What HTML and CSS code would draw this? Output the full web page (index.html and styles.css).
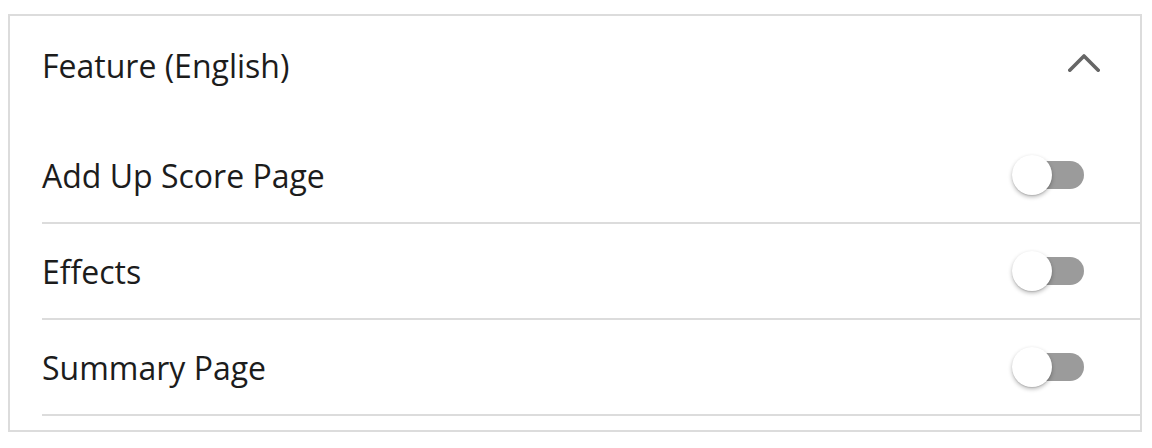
FILE: index.html
```html
<!DOCTYPE html>
<html>
<head>
<meta charset="utf-8">
<link rel="stylesheet" href="styles.css">
</head>
<body>
<section class="panel">
  <header class="panel-header">
    <h2 class="panel-title">Feature (English)</h2>
    <svg class="chevron" width="32" height="18" viewBox="0 0 32 18" aria-hidden="true">
      <polyline points="1.8,16.2 16,2 30.2,16.2" fill="none" stroke="#666666" stroke-width="3.6" stroke-linecap="round" stroke-linejoin="round"/>
    </svg>
  </header>
  <ul class="rows">
    <li class="row"><span class="label">Add Up Score Page</span><span class="switch"><span class="track"></span><span class="thumb"></span></span></li>
    <li class="row"><span class="label">Effects</span><span class="switch"><span class="track"></span><span class="thumb"></span></span></li>
    <li class="row"><span class="label">Summary Page</span><span class="switch"><span class="track"></span><span class="thumb"></span></span></li>
  </ul>
</section>
</body>
</html>
```
FILE: styles.css
```css
html, body {
  margin: 0;
  padding: 0;
  background: #ffffff;
}
body {
  font-family: "Open Sans", "Noto Sans", sans-serif;
  color: #1c1c1c;
}
.panel {
  box-sizing: border-box;
  width: 1134px;
  height: 418px;
  margin: 14px 0 0 8px;
  border: 2px solid #dcdcdc;
  padding: 0 0 14px 32px;
}
.panel-header {
  display: flex;
  align-items: center;
  justify-content: space-between;
  height: 100px;
  margin-bottom: 12px;
  padding-right: 40px;
}
.panel-title {
  margin: 0;
  font-size: 32px;
  font-weight: 400;
  line-height: 40px;
}
.chevron {
  display: block;
  margin-bottom: 7px;
}
.rows {
  list-style: none;
  margin: 0;
  padding: 0;
}
.row {
  display: flex;
  align-items: center;
  justify-content: space-between;
  height: 94px;
  border-bottom: 2px solid #dcdcdc;
  padding-right: 56px;
}
.label {
  font-size: 32px;
  line-height: 40px;
  padding-top: 1px;
}
.switch {
  position: relative;
  display: block;
  width: 72px;
  height: 28px;
}
.track {
  display: block;
  margin-left: 4px;
  width: 68px;
  height: 28px;
  border-radius: 14px;
  background: #9b9b9b;
}
.thumb {
  position: absolute;
  left: 0;
  top: -6px;
  width: 40px;
  height: 40px;
  border-radius: 50%;
  background: #ffffff;
  box-shadow: 0 2px 4px rgba(0, 0, 0, 0.28), 0 1px 1px rgba(0, 0, 0, 0.1);
}
```
